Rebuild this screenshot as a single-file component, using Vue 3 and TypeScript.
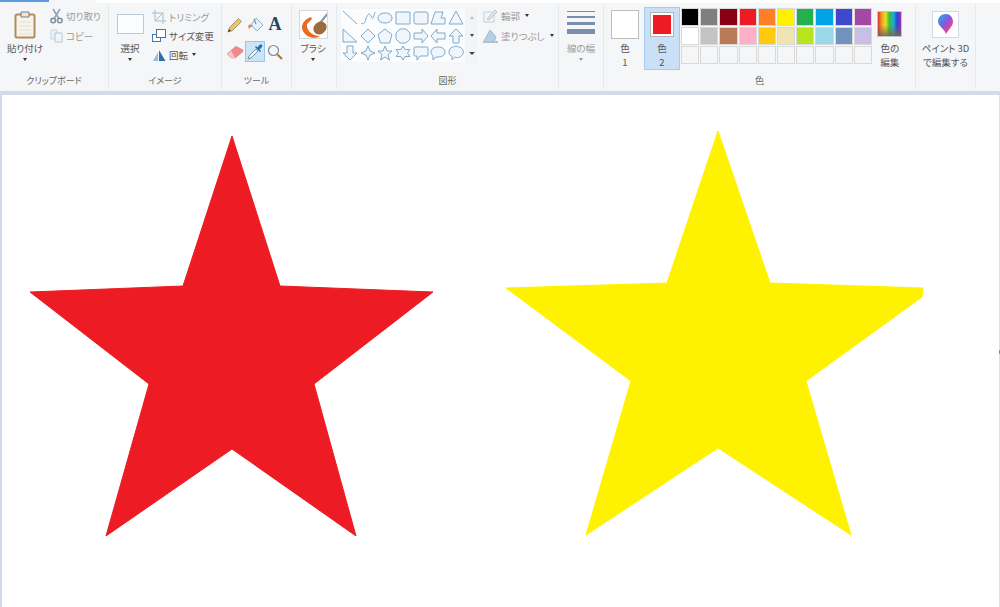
<script setup lang="ts">
// mspaint ribbon with two stars on the canvas
const paletteTop = ['#000000', '#7f7f7f', '#880015', '#ed1c24', '#ff7f27', '#fff200', '#22b14c', '#00a2e8', '#3f48cc', '#a349a4']
const paletteMid = ['#ffffff', '#c3c3c3', '#b97a57', '#ffaec9', '#ffc90e', '#efe4b0', '#b5e61d', '#99d9ea', '#7092be', '#c8bfe7']
const paletteCells = [...paletteTop, ...paletteMid, ...Array(10).fill('')]

// each shape is drawn in a 16x16 box
const shapes: string[] = [
  'M1 1L15 14',
  'M1 13C3 15 5 13 6 9S9 2 11 6 13 9 15 2',
  'M8 3C12 3 15 5 15 8S12 13 8 13 1 11 1 8 4 3 8 3Z',
  'M1 2H15V14H1Z',
  'M3 2H13Q15 2 15 4V12Q15 14 13 14H3Q1 14 1 12V4Q1 2 3 2Z',
  'M1 14L5 2H13L11 8H15V14Z',
  'M8 1L15 14H1Z',
  'M1 1L15 14H1Z',
  'M8 1L15 8L8 15L1 8Z',
  'M8 1L15 6.5L12.5 15H3.5L1 6.5Z',
  'M5 1H11L15 5V11L11 15H5L1 11V5Z',
  'M1 5H9V1L15 8L9 15V11H1Z',
  'M15 5H7V1L1 8L7 15V11H15Z',
  'M8 1L15 8H11V15H5V8H1Z',
  'M5 1H11V8H15L8 15L1 8H5Z',
  'M8 1L10 6L15 8L10 10L8 15L6 10L1 8L6 6Z',
  'M8 1L10 6H15L11 9.5L12.5 15L8 12L3.5 15L5 9.5L1 6H6Z',
  'M8 1L10 4.5H15L12.5 8L15 11.5H10L8 15L6 11.5H1L3.5 8L1 4.5H6Z',
  'M2 2H14Q15 2 15 3V10Q15 11 14 11H7L4 15V11H2Q1 11 1 10V3Q1 2 2 2Z',
  'M8 2C12 2 15 4 15 7S12 12 8 12H6L3 15V11C2 10 1 9 1 7 1 4 4 2 8 2Z',
  'M5 2C7 1 9 1 11 2 13 2 15 4 15 6 16 8 15 10 13 11 12 13 9 13 7 12L4 15V11C2 11 1 9 1 7 1 4 3 2 5 2Z',
]

const strokeLines = [1, 2, 3, 5]
const redStar = '232,136 280,286 433,292 314,384 356,536 232,449 106,536 149,384 30,292 183,286'
const yellowStar = '718,131 770,283 923,288 922,297 806,381 851,535 718,448 586,535 631,381 506,288 667,283'
</script>

<template>
  <div class="paint">
    <div class="tabstrip"><span class="tab-active"></span><span class="tab-rest"></span></div>

    <div class="ribbon">
      <section class="group g-clip">
        <div class="body">
          <div class="big paste">
            <div class="icon">
              <svg width="24" height="28" viewBox="0 0 24 28">
                <rect x="2.500" y="3.500" width="19" height="23" rx="1.500" fill="#f6f3e8" stroke="#b58c5e" stroke-width="2" />
                <path d="M6 11H18M6 15H18M6 19H18M6 23H18" stroke="#e2dfd3" />
                <path d="M8 1H16V6H8Z" fill="#e8e6df" stroke="#7d7d7d" />
              </svg>
            </div>
            <span class="txt">貼り付け</span>
            <span class="arrow"></span>
          </div>
          <div class="smalls">
            <div class="small off">
              <svg width="13" height="16" viewBox="0 0 13 16">
                <path d="M3 1L8.500 10M10 1L4.500 10" stroke="#8fa3b5" stroke-width="1.500" fill="none" />
                <circle cx="3.200" cy="12.500" r="2.300" fill="none" stroke="#7b90a5" stroke-width="1.500" />
                <circle cx="9.800" cy="12.500" r="2.300" fill="none" stroke="#7b90a5" stroke-width="1.500" />
              </svg>
              <span>切り取り</span>
            </div>
            <div class="small off">
              <svg width="13" height="14" viewBox="0 0 13 14">
                <path d="M1 1H7V10H1Z" fill="#e9f1f8" stroke="#c7d6e3" />
                <path d="M5 4H12V13H5Z" fill="#f1f5f9" stroke="#b5c6d5" />
              </svg>
              <span>コピー</span>
            </div>
          </div>
        </div>
        <div class="label">クリップボード</div>
      </section>

      <section class="group g-image">
        <div class="body">
          <div class="big select">
            <div class="icon"><span class="select-rect"></span></div>
            <span class="txt">選択</span>
            <span class="arrow"></span>
          </div>
          <div class="smalls tight">
            <div class="small off">
              <svg width="14" height="14" viewBox="0 0 14 14">
                <path d="M3 0V11H14M0 3H11V14M3 11L11 3" stroke="#a9bccd" fill="none" />
              </svg>
              <span>トリミング</span>
            </div>
            <div class="small">
              <svg width="14" height="13" viewBox="0 0 14 13">
                <rect x="0.500" y="5.500" width="8" height="7" fill="#fff" stroke="#3a7fc0" />
                <rect x="4.500" y="0.500" width="9" height="8" fill="#fff" stroke="#5c6f80" />
              </svg>
              <span>サイズ変更</span>
            </div>
            <div class="small">
              <svg width="14" height="12" viewBox="0 0 14 12">
                <path d="M7 1L13.500 12H7Z" fill="#2f6ea8" />
                <path d="M6 3V12H1Z" fill="#8cc0df" />
              </svg>
              <span>回転</span>
              <span class="arrow inline"></span>
            </div>
          </div>
        </div>
        <div class="label">イメージ</div>
      </section>

      <section class="group g-tools">
        <div class="body">
          <div class="tool-grid">
            <div class="tool">
              <svg width="16" height="16" viewBox="0 0 16 16">
                <path d="M1 15L2.500 10.500L11.500 1.500L14.500 4.500L5.500 13.500Z" fill="#e9c46a" stroke="#8a7a50" stroke-width="0.700" />
                <path d="M1 15L2 12L4 14Z" fill="#444" />
              </svg>
            </div>
            <div class="tool">
              <svg width="17" height="16" viewBox="0 0 17 16">
                <path d="M9 1L16 8L10 14L4 8Z" fill="#e6eff6" stroke="#8fb0cc" />
                <path d="M4 8C1 6 1 10 2 12C3 10 5 10 6 8Z" fill="#ee7a5c" />
                <path d="M7 2L9 7" stroke="#5c7da0" />
              </svg>
            </div>
            <div class="tool letter">A</div>
            <div class="tool">
              <svg width="18" height="14" viewBox="0 0 18 14">
                <path d="M1 9L9 2Q10 1 11.500 2L17 5Q17.500 6 16.500 7L9 13H5Z" fill="#f08a8a" stroke="#d97a7a" stroke-width="0.600" />
                <path d="M1 9L5 13H9L5.500 6Z" fill="#f7c5c5" />
              </svg>
            </div>
            <div class="tool active">
              <svg width="17" height="17" viewBox="0 0 17 17">
                <path d="M1 16L2 13L9 6L11 8L4 15Z" fill="#f5f5f5" stroke="#5f7a90" stroke-width="0.800" />
                <path d="M8 4L13 9L14 8L12.500 6.500L15 4Q16 2 14.500 1.500Q13 1 12 2.500L10.500 4.500L9 3Z" fill="#1f6fa8" />
              </svg>
            </div>
            <div class="tool">
              <svg width="16" height="16" viewBox="0 0 16 16">
                <circle cx="6.500" cy="6.500" r="5" fill="#f3f8fc" stroke="#7d8a96" stroke-width="1.200" />
                <path d="M10.500 10.500L15 15" stroke="#a8794d" stroke-width="2.200" />
              </svg>
            </div>
          </div>
        </div>
        <div class="label">ツール</div>
      </section>

      <section class="group g-brush">
        <div class="body">
          <div class="big">
            <div class="icon">
              <span class="brush-box">
                <svg width="29" height="29" viewBox="0 0 29 29">
                  <path d="M20 12L29 1" stroke="#8a93a3" stroke-width="2" />
                  <path d="M11 6C4 8 0 15 3 20C6 26 14 29 20 25C13 25 6 20 7 13L12 8Z" fill="#ea6a20" />
                  <ellipse cx="20" cy="17" rx="7" ry="6" transform="rotate(-40 20 17)" fill="#9a6b3d" />
                </svg>
              </span>
            </div>
            <span class="txt">ブラシ</span>
            <span class="arrow"></span>
          </div>
        </div>
      </section>

      <section class="group g-shapes">
        <div class="body">
          <div class="gallery">
            <div class="shape-grid">
              <svg v-for="(d, i) in shapes" :key="i" class="shape" width="16" height="16" viewBox="0 0 16 16">
                <path :d="d" :fill="i < 2 ? 'none' : '#f0f6fb'" stroke="#7faac9" stroke-width="1" />
              </svg>
            </div>
            <div class="scroller">
              <span class="tri up"></span>
              <span class="tri"></span>
              <span class="tri more"></span>
            </div>
          </div>
          <div class="smalls outline">
            <div class="small off">
              <svg width="15" height="15" viewBox="0 0 15 15">
                <path d="M1 4H9M1 4V14H11V7" stroke="#c2cfda" fill="none" />
                <path d="M4 11L12 2L14 4L6 12Z" fill="#dfe7ee" stroke="#9fb2c2" stroke-width="0.700" />
              </svg>
              <span>輪郭</span>
              <span class="arrow inline"></span>
            </div>
            <div class="small off">
              <svg width="15" height="15" viewBox="0 0 15 15">
                <path d="M1 13L7 2L13 9L11 14H2Z" fill="#b9cfe0" stroke="#8ba8c0" stroke-width="0.700" />
                <path d="M0 13H15V15H0Z" fill="#a9c3d8" />
              </svg>
              <span>塗りつぶし</span>
              <span class="arrow inline"></span>
            </div>
          </div>
        </div>
        <div class="label">図形</div>
      </section>

      <section class="group g-stroke">
        <div class="body">
          <div class="big">
            <div class="icon lines">
              <span v-for="h in strokeLines" :key="h" class="line" :style="{ height: h + 'px' }"></span>
            </div>
            <span class="txt muted">線の幅</span>
            <span class="arrow soft"></span>
          </div>
        </div>
      </section>

      <section class="group g-colors">
        <div class="body">
          <div class="big color-btn">
            <div class="icon"><span class="color-one"></span></div>
            <span class="txt">色</span>
            <span class="txt">1</span>
          </div>
          <div class="big color-btn selected">
            <div class="icon"><span class="color-two"><i></i></span></div>
            <span class="txt">色</span>
            <span class="txt">2</span>
          </div>
          <div class="palette">
            <span
              v-for="(c, i) in paletteCells"
              :key="i"
              class="swatch"
              :style="c ? { background: c } : undefined"
            ></span>
          </div>
          <div class="big edit">
            <div class="icon"><span class="spectrum"></span></div>
            <span class="txt">色の</span>
            <span class="txt">編集</span>
          </div>
        </div>
        <div class="label">色</div>
      </section>

      <section class="group g-3d">
        <div class="body">
          <div class="big">
            <div class="icon">
              <span class="p3d-box">
                <svg width="17" height="22" viewBox="0 0 17 22">
                  <defs>
                    <linearGradient id="balloon" x1="0" y1="0" x2="1" y2="1">
                      <stop offset="0" stop-color="#25b3e8" />
                      <stop offset="0.450" stop-color="#7a5ce0" />
                      <stop offset="0.750" stop-color="#ee3f8f" />
                      <stop offset="1" stop-color="#f7a11a" />
                    </linearGradient>
                  </defs>
                  <path d="M8.500 1C13 1 16 4.500 16 8.500C16 13 12 16 9 21C7.500 16 1 13 1 8.500C1 4.500 4 1 8.500 1Z" fill="url(#balloon)" />
                </svg>
              </span>
            </div>
            <span class="txt">ペイント 3D</span>
            <span class="txt">で編集する</span>
          </div>
        </div>
      </section>
    </div>

    <div class="divider"></div>

    <main class="canvas">
      <svg width="1000" height="512" viewBox="0 95 1000 512" class="stars">
        <polygon :points="redStar" fill="#ed1c24" stroke="#ed1c24" stroke-width="1" stroke-linejoin="round" />
        <polygon :points="yellowStar" fill="#fff200" stroke="#fff200" stroke-width="1" stroke-linejoin="round" />
      </svg>
      <span class="grip"></span>
    </main>
  </div>
</template>

<style>
html, body { margin: 0; background: #fff; overflow: hidden; }
</style>

<style scoped>
.paint {
  width: 1000px;
  height: 607px;
  overflow: hidden;
  font-family: "Noto Sans CJK JP", "Noto Sans", sans-serif;
  font-size: 9.500px;
  font-feature-settings: "palt";
  color: #555;
  background: #fff;
}
.tabstrip { display: flex; height: 3px; background: #f5f6f7; }
.tab-active { width: 49px; height: 2px; background: #5a9bdc; }
.tab-rest { width: 47px; }
.tabstrip::after { content: ""; flex: 1; background: #fff; }

.ribbon { display: flex; height: 88px; padding-top: 2px; box-sizing: border-box; background: #f5f6f7; }
.group {
  display: flex;
  flex-direction: column;
  height: 84px;
  box-sizing: border-box;
  border-right: 1px solid #e6e9ec;
}
.g-clip { width: 109px; }
.g-image { width: 113px; }
.g-tools { width: 70px; }
.g-brush { width: 45px; }
.g-shapes { width: 222px; }
.g-stroke { width: 45px; }
.g-colors { width: 312px; }
.g-3d { width: 60px; }

.body { display: flex; height: 68px; padding-top: 2px; box-sizing: border-box; }
.label { height: 16px; line-height: 16px; font-size: 9px; text-align: center; color: #666; }

.big { display: flex; flex-direction: column; align-items: center; }
.icon { display: flex; align-items: center; justify-content: center; height: 34px; }
.txt { height: 14px; line-height: 14px; white-space: nowrap; }
.muted { color: #9a9a9a; }
.arrow {
  width: 0;
  height: 0;
  margin-top: 3px;
  border: 2.500px solid transparent;
  border-top: 3px solid #333;
  border-bottom-width: 0;
}
.arrow.soft { border-top-color: #999; }
.arrow.inline { margin: 0 0 0 2px; }

.paste { width: 50px; }
.paste .icon { padding-top: 1px; box-sizing: border-box; }
.smalls { display: flex; flex-direction: column; gap: 5px; padding-top: 1px; }
.small { display: flex; align-items: center; gap: 3px; height: 15px; white-space: nowrap; }
.off { color: #9a9a9a; }

.g-image .body { padding-left: 6px; }
.select { width: 30px; margin-right: 7px; }
.select-rect {
  display: block;
  width: 25px;
  height: 18px;
  background: #fbfcfd;
  border: 1px solid #b6cadb;
}
.tight { gap: 4px; padding-top: 2px; }
.tight .small { gap: 2px; }
.tight .small span:not(.arrow) { margin-left: 1px; }

.tool-grid {
  display: grid;
  grid-template-columns: repeat(3, 20px);
  grid-auto-rows: 21px;
  row-gap: 6px;
  padding: 7px 0 0 3px;
}
.tool { display: flex; align-items: center; justify-content: center; }
.tool.active { background: #cce4f7; border: 1px solid #9cc5e8; box-sizing: border-box; }
.letter { font-family: "Liberation Serif", serif; font-weight: 700; font-size: 18px; color: #24456b; }

.g-brush .body { justify-content: center; padding-right: 2px; }
.brush-box {
  display: block;
  width: 29px;
  height: 29px;
  background: #fff;
  border: 1px solid #d5d8dc;
  box-sizing: border-box;
  overflow: hidden;
}

.gallery { display: flex; width: 138px; height: 53px; margin: 2px 0 0 4px; background: #fbfcfd; }
.shape-grid {
  display: grid;
  grid-template-columns: repeat(7, 17.700px);
  grid-auto-rows: 17.700px;
  width: 124px;
}
.shape { place-self: center; }
.scroller {
  display: flex;
  flex-direction: column;
  align-items: center;
  justify-content: space-around;
  width: 13px;
  background: #f2f4f6;
}
.tri { width: 0; height: 0; border: 2.500px solid transparent; border-top: 3px solid #444; border-bottom-width: 0; }
.tri.up { border-top-width: 0; border-bottom: 3px solid #bbb; }
.tri.more { border-left-width: 3px; border-right-width: 3px; }
.outline { gap: 5px; margin-left: 4px; padding-top: 1px; }

.lines { flex-direction: column; align-items: stretch; justify-content: flex-start; gap: 4px; width: 28px; padding-top: 4px; box-sizing: border-box; }
.line { display: block; background: #7a8eb0; }
.g-stroke .body { justify-content: center; }

.g-colors .body { padding-left: 7px; }
.color-btn { width: 28px; margin-right: 5px; }
.color-one {
  display: block;
  width: 28px;
  height: 29px;
  box-sizing: border-box;
  background: #fff;
  border: 1px solid #bdbdbd;
}
.selected {
  width: 36px;
  height: 63px;
  margin: 0 1px 0 0;
  box-sizing: border-box;
  background: #c9e0f7;
  border: 1px solid #a6cbee;
}
.color-two {
  display: block;
  padding: 2px;
  background: #fff;
  border: 1px solid #b4b4b4;
}
.color-two i { display: block; width: 18px; height: 19px; background: #ed1c24; }
.palette {
  display: grid;
  grid-template-columns: repeat(10, 18.200px);
  grid-auto-rows: 18px;
  gap: 1px;
  height: 56px;
  padding-top: 1px;
}
.swatch { display: block; box-sizing: border-box; background: #f5f6f7; border: 1px solid #d9d9d9; }
.edit { width: 30px; margin-left: 3px; }
.spectrum {
  display: block;
  width: 25px;
  height: 26px;
  border: 1px solid #c4c4c4;
  box-sizing: border-box;
  background:
    linear-gradient(to bottom, rgba(90, 70, 60, 0) 55%, rgba(120, 100, 85, 0.900) 100%),
    linear-gradient(to right, #d9362c, #f0a020, #e6e020, #30c040, #20b0d0, #2848d0, #a030b0);
}
.g-3d .body { justify-content: center; }
.p3d-box {
  display: flex;
  align-items: center;
  justify-content: center;
  width: 27px;
  height: 27px;
  background: #fff;
  border: 1px solid #d5d8dc;
  box-sizing: border-box;
}

.divider { height: 4px; background: #d3dbe8; }
.canvas { height: 512px; border-left: 2px solid #d3dbe8; border-right: 1px solid #e3e3e3; box-sizing: border-box; position: relative; }
.stars { position: absolute; top: 0; left: -2px; display: block; }
.grip { position: absolute; right: -1px; top: 255px; width: 1px; height: 4px; background: #8a8a8a; }
</style>
